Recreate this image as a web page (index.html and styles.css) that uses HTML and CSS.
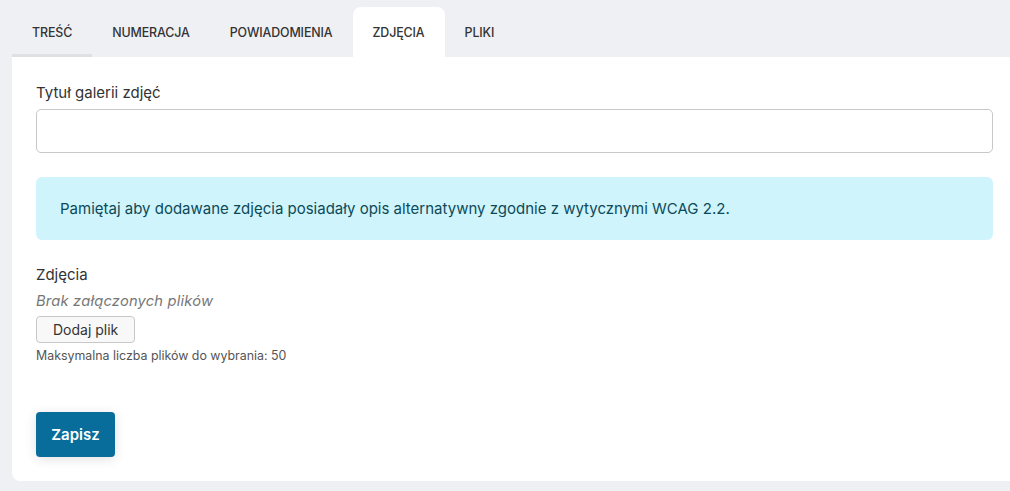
FILE: index.html
```html
<!DOCTYPE html>
<html lang="pl">
<head>
<meta charset="utf-8">
<title>Zdjęcia</title>
<link rel="stylesheet" href="styles.css">
</head>
<body>
<div class="page">
  <nav class="tabs">
    <a class="tab tab-first">TREŚĆ</a>
    <a class="tab">NUMERACJA</a>
    <a class="tab">POWIADOMIENIA</a>
    <a class="tab tab-active">ZDJĘCIA</a>
    <a class="tab">PLIKI</a>
  </nav>
  <section class="card">
    <label class="label" for="title">Tytuł galerii zdjęć</label>
    <input id="title" class="input" type="text">
    <div class="alert">Pamiętaj aby dodawane zdjęcia posiadały opis alternatywny zgodnie z wytycznymi WCAG 2.2.</div>
    <div class="label label-files">Zdjęcia</div>
    <div class="empty">Brak załączonych plików</div>
    <button class="btn-add" type="button">Dodaj plik</button>
    <div class="hint">Maksymalna liczba plików do wybrania: 50</div>
    <button class="btn-save" type="button">Zapisz</button>
  </section>
</div>
</body>
</html>
```
FILE: styles.css
```css
html, body {
  margin: 0;
  padding: 0;
  background: #eff0f3;
  overflow: hidden;
}
body {
  font-family: "Inter", "Liberation Sans", sans-serif;
  color: #333;
}
.page {
  padding: 7px 0 0 12px;
  margin-right: -7px;
}
.tabs {
  display: flex;
  height: 50px;
}
.tab {
  display: flex;
  align-items: center;
  padding: 0 20px;
  font-size: 12.4px;
  font-weight: 500;
  color: #333;
  letter-spacing: -0.1px;
  border-radius: 8px 8px 0 0;
  box-sizing: border-box;
}
.tab-first {
  border-bottom: 3px solid #dfe0e3;
  padding-top: 3px;
  border-radius: 0;
}
.tab-active {
  background: #fff;
}
.card {
  background: #fff;
  border-radius: 0 0 0 8px;
  padding: 26px 24px 24px;
  display: flex;
  flex-direction: column;
  align-items: flex-start;
}
.label {
  font-size: 15px;
  color: #333;
  line-height: 20px;
}
.input {
  margin-top: 6px;
  width: 100%;
  height: 44px;
  box-sizing: border-box;
  border: 1px solid #c8c8c8;
  border-radius: 5px;
  font: inherit;
}
.alert {
  margin-top: 24px;
  width: 100%;
  box-sizing: border-box;
  background: #cff4fc;
  color: #0c4a58;
  border-radius: 6px;
  padding: 21px 24px;
  font-size: 15px;
  line-height: 21px;
}
.label-files {
  margin-top: 25px;
}
.empty {
  margin-top: 6px;
  font-size: 14.7px;
  letter-spacing: 0.2px;
  font-style: italic;
  color: #777;
  line-height: 20px;
}
.btn-add {
  margin-top: 5px;
  height: 27px;
  padding: 0 16px;
  background: #f8f8f8;
  border: 1px solid #c8c8c8;
  border-radius: 4px;
  font: inherit;
  font-size: 14px;
  color: #333;
}
.hint {
  margin-top: 5px;
  font-size: 12.4px;
  color: #555;
  line-height: 16px;
}
.btn-save {
  margin-top: 48px;
  width: 79px;
  height: 45px;
  background: #086d9b;
  color: #fff;
  border: none;
  border-radius: 4px;
  font: inherit;
  font-size: 15px;
  font-weight: 600;
  box-shadow: 0 2px 12px rgba(0, 0, 0, 0.12);
}
```
